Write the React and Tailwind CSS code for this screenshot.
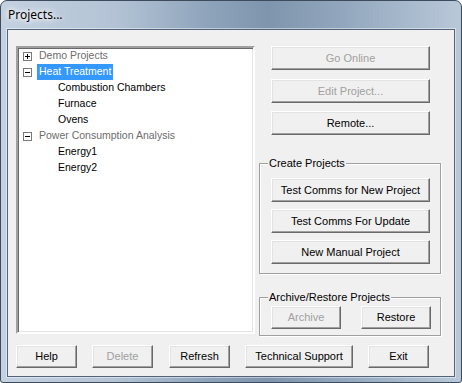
import React from "react";

function Btn({ children, disabled, className = "" }) {
  return (
    <button
      type="button"
      className={`flex items-center justify-center bg-[#f0f0f0] border border-t-white border-l-white border-b-[#696969] border-r-[#696969] shadow-[inset_-1px_-1px_0_#a0a0a0,inset_1px_1px_0_#e3e3e3] text-[11px] leading-none ${
        disabled ? "text-[#a0a0a0]" : "text-black"
      } ${className}`}
    >
      {children}
    </button>
  );
}

function ExpandBox({ open }) {
  return (
    <svg width="9" height="9" viewBox="0 0 9 9" className="shrink-0">
      <rect x="0.5" y="0.5" width="8" height="8" fill="#fff" stroke="#7a7a7a" />
      <line x1="2" y1="4.5" x2="7" y2="4.5" stroke="#000" />
      {!open && <line x1="4.5" y1="2" x2="4.5" y2="7" stroke="#000" />}
    </svg>
  );
}

function Parent({ label, open, selected, muted }) {
  return (
    <div className="h-[16px] flex items-center pl-[5px]">
      <ExpandBox open={open} />
      <span
        className={`ml-[5px] px-[2px] h-[16px] flex items-center ${
          selected ? "bg-[#3399ff] text-white" : muted ? "text-[#6d6d6d]" : "text-black"
        }`}
      >
        {label}
      </span>
    </div>
  );
}

function Child({ label }) {
  return <div className="h-[16px] flex items-center pl-[40px] text-black">{label}</div>;
}

function GroupBox({ title, className = "", children }) {
  return (
    <div
      className={`relative border border-[#a0a0a0] shadow-[inset_1px_1px_0_#fff,1px_1px_0_#fff] ${className}`}
    >
      <span className="absolute -top-[7px] left-[8px] px-[1px] bg-[#f0f0f0] text-[11px] leading-[13px] text-black">
        {title}
      </span>
      {children}
    </div>
  );
}

export default function App() {
  return (
    <div className="w-[462px] h-[383px] bg-white font-['Liberation_Sans',Arial,sans-serif]">
      <div className="w-full h-full flex flex-col rounded-t-[7px] rounded-b-[3px] border border-[#3d4b5c] bg-[linear-gradient(90deg,#c3d1e0_0%,#b3c3d5_25%,#8ea4bb_45%,#7e95ad_58%,#93a8be_75%,#b9c8d9_100%)]">
        {/* title bar */}
        <div className="h-[28px] flex items-center pl-[7px]">
          <span className="font-['Noto_Sans',sans-serif] text-[12px] text-black [text-shadow:0_0_8px_#fff,0_0_6px_#fff,0_0_4px_rgba(255,255,255,0.8)]">
            Projects...
          </span>
        </div>

        {/* client area */}
        <div className="mx-[6px] h-[348px] border border-[#53647a] bg-[#f0f0f0] shadow-[0_0_0_1px_rgba(255,255,255,0.45)]">
          <div className="pt-[16px] pl-[8px] flex">
            {/* tree */}
            <div className="w-[239px] h-[288px] bg-white border-2 border-t-[#a0a0a0] border-l-[#a0a0a0] border-b-white border-r-white shadow-[inset_1px_1px_0_#696969,inset_-1px_-1px_0_#e3e3e3] text-[10.5px]">
              <Parent label="Demo Projects" muted />
              <Parent label="Heat Treatment" open selected />
              <Child label="Combustion Chambers" />
              <Child label="Furnace" />
              <Child label="Ovens" />
              <Parent label="Power Consumption Analysis" open muted />
              <Child label="Energy1" />
              <Child label="Energy2" />
            </div>

            {/* right column */}
            <div className="ml-[4px] w-[182px] flex flex-col">
              <Btn disabled className="ml-[12px] w-[159px] h-[24px]">Go Online</Btn>
              <Btn disabled className="ml-[12px] mt-[9px] w-[159px] h-[24px]">Edit Project...</Btn>
              <Btn className="ml-[12px] mt-[8px] w-[159px] h-[24px]">Remote...</Btn>

              <GroupBox title="Create Projects" className="mt-[28px] h-[111px]">
                <div className="flex flex-col pt-[14px] pl-[11px]">
                  <Btn className="w-[159px] h-[24px]">Test Comms for New Project</Btn>
                  <Btn className="mt-[7px] w-[159px] h-[24px]">Test Comms For Update</Btn>
                  <Btn className="mt-[7px] w-[159px] h-[24px]">New Manual Project</Btn>
                </div>
              </GroupBox>

              <GroupBox title="Archive/Restore Projects" className="mt-[23px] h-[39px]">
                <div className="flex pt-[8px] pl-[11px]">
                  <Btn disabled className="w-[70px] h-[23px]">Archive</Btn>
                  <Btn className="ml-[20px] w-[70px] h-[23px]">Restore</Btn>
                </div>
              </GroupBox>
            </div>
          </div>

          {/* bottom buttons */}
          <div className="flex mt-[9px] pl-[8px]">
            <Btn className="w-[61px] h-[23px]">Help</Btn>
            <Btn disabled className="ml-[15px] w-[61px] h-[23px]">Delete</Btn>
            <Btn className="ml-[16px] w-[61px] h-[23px]">Refresh</Btn>
            <Btn className="ml-[15px] w-[108px] h-[23px]">Technical Support</Btn>
            <Btn className="ml-[15px] w-[61px] h-[23px]">Exit</Btn>
          </div>
        </div>
      </div>
    </div>
  );
}
